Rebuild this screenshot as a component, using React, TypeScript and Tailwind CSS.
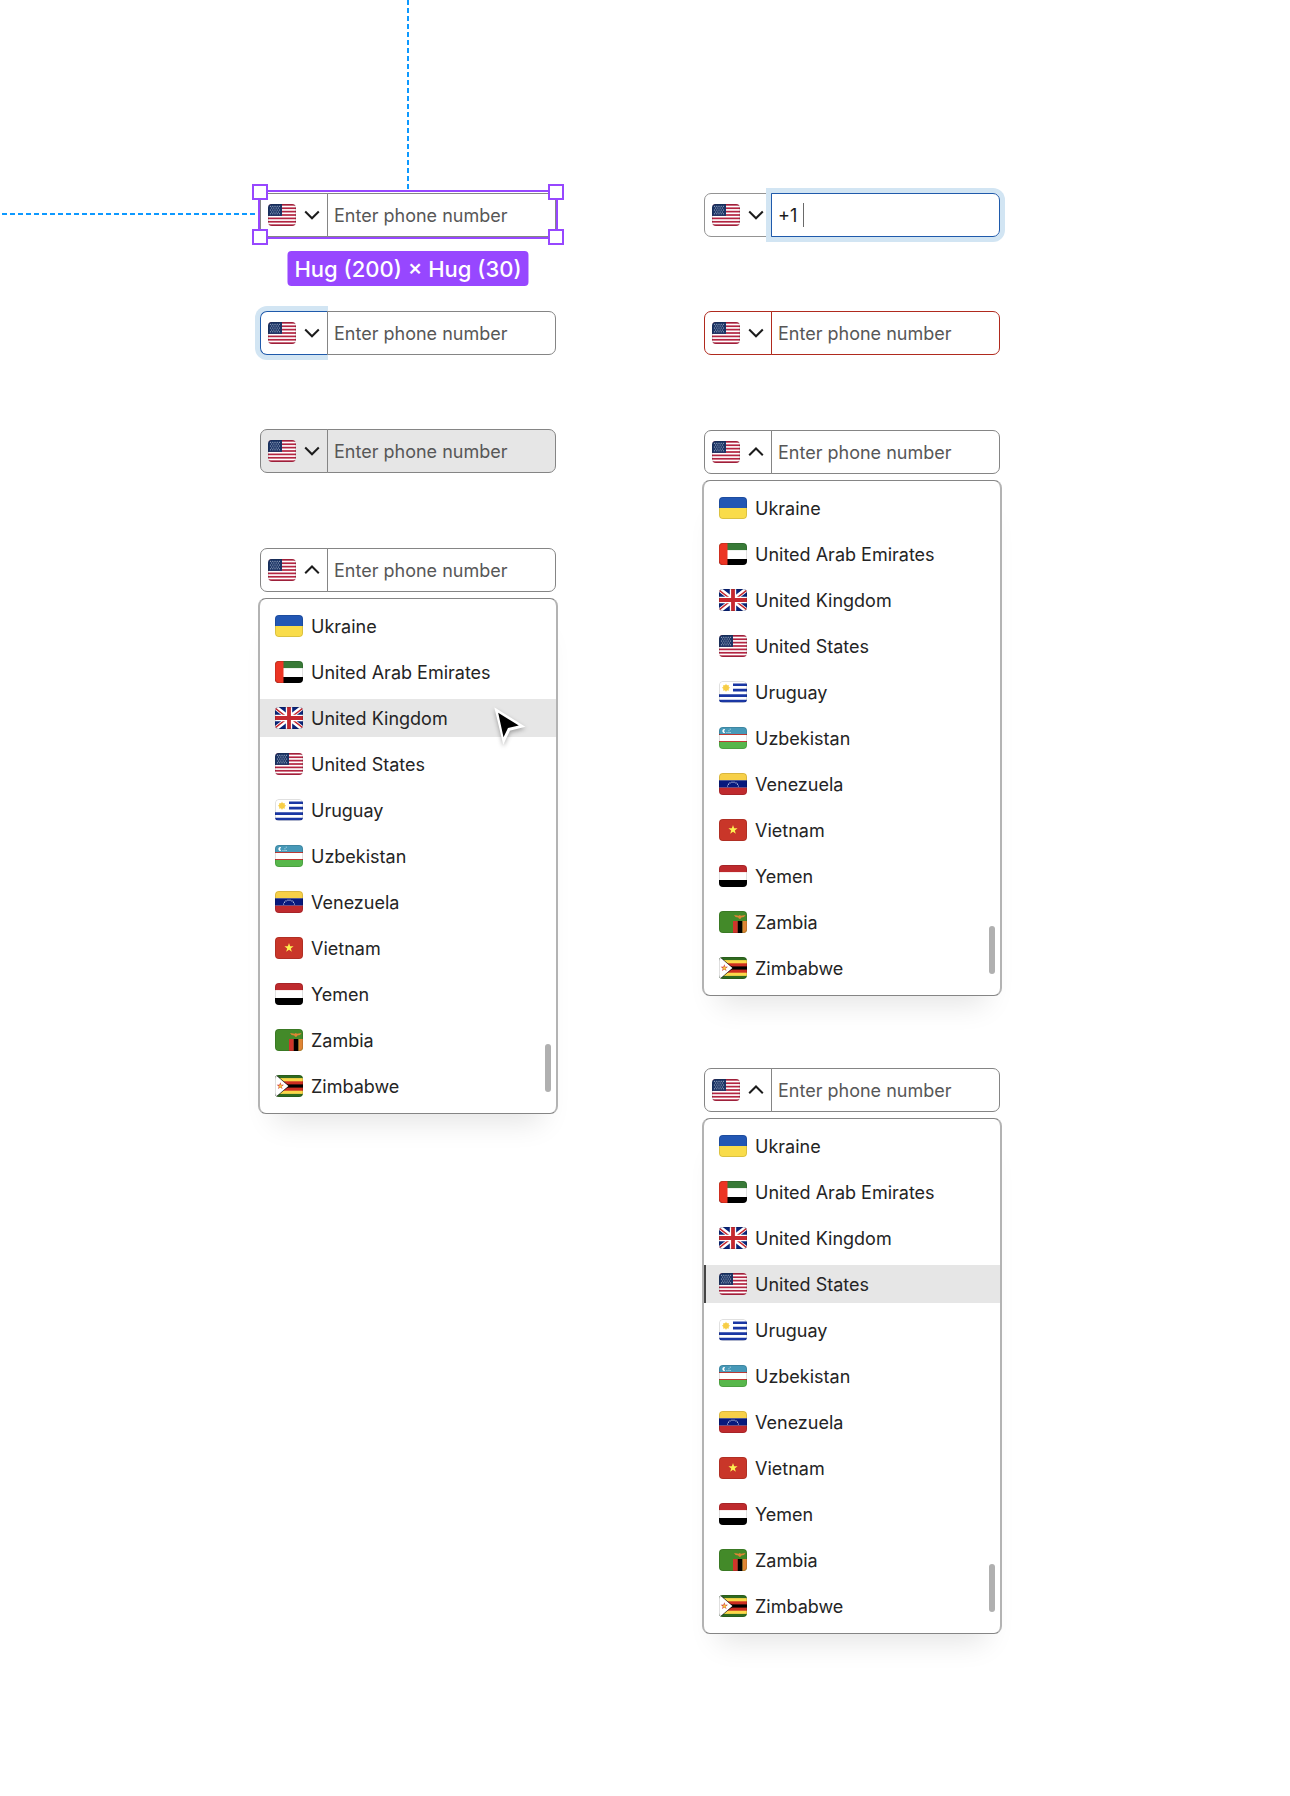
import type { ReactNode } from "react";

const starPoints = (cx: number, cy: number, r: number, inner = 0.4) =>
  Array.from({ length: 10 }, (_, i) => {
    const radius = i % 2 ? r * inner : r;
    const a = (Math.PI / 5) * i - Math.PI / 2;
    return `${(cx + radius * Math.cos(a)).toFixed(2)},${(cy + radius * Math.sin(a)).toFixed(2)}`;
  }).join(" ");

const flags: Record<string, ReactNode> = {
  ua: (
    <>
      <rect width="28" height="11" fill="#2257b4" />
      <rect y="11" width="28" height="11" fill="#f9dc4a" />
    </>
  ),
  ae: (
    <>
      <rect width="28" height="7.3" fill="#387a37" />
      <rect y="7.3" width="28" height="8.7" fill="#fff" />
      <rect y="16" width="28" height="6" fill="#000" />
      <rect width="8.5" height="22" fill="#ec3524" />
    </>
  ),
  gb: (
    <>
      <rect width="28" height="22" fill="#0a2478" />
      <path d="M0 0 28 22M28 0 0 22" stroke="#fff" strokeWidth="4.6" />
      <path d="M0 1 11 9.6M17 12.4 28 21M28 1 17 9.6M11 12.4 0 21" stroke="#c5282f" strokeWidth="1.5" />
      <path d="M14 0v22M0 11h28" stroke="#fff" strokeWidth="6.4" />
      <path d="M14 0v22M0 11h28" stroke="#c5282f" strokeWidth="3.8" />
    </>
  ),
  us: (
    <>
      <rect width="28" height="22" fill="#fff" />
      {[0, 1, 2, 3, 4, 5, 6].map((i) => (
        <rect key={i} y={i * 3.385} width="28" height="1.7" fill="#b32542" />
      ))}
      <rect width="14" height="11.9" fill="#1c3566" />
      {[0, 1, 2, 3, 4].map((row) =>
        [0, 1, 2, 3, 4].slice(0, row % 2 ? 4 : 5).map((col) => (
          <circle
            key={`${row}-${col}`}
            cx={2.6 + col * 2.2 + (row % 2 ? 1.1 : 0)}
            cy={2.2 + row * 1.9}
            r="0.5"
            fill="#d5dcea"
          />
        ))
      )}
    </>
  ),
  uy: (
    <>
      <rect width="28" height="22" fill="#fff" />
      <path d="M14 3.7h14M14 9.1h14M0 14.6h28M0 20h28" stroke="#1a37a4" strokeWidth="2.6" />
      <polygon points="7,2.6 8,4.4 10,3.9 9.6,5.8 11.2,6.8 9.6,7.8 10,9.7 8,9.2 7,11 6,9.2 4,9.7 4.4,7.8 2.8,6.8 4.4,5.8 4,3.9 6,4.4" fill="#f9d65c" />
      <circle cx="7" cy="6.8" r="2.7" fill="#f7cd46" />
    </>
  ),
  uz: (
    <>
      <rect width="28" height="22" fill="#fff" />
      <rect width="28" height="7" fill="#4799b8" />
      <rect y="15" width="28" height="7" fill="#57b74b" />
      <path d="M0 7.5h28M0 14.5h28" stroke="#bd3a34" />
      <path d="M6.2 2.2a2 2 0 1 0 0 3.6 2.4 2.4 0 0 1 0-3.6" fill="#fff" />
      <path d="M7.5 5.5h.9M9.5 5.5h.9M9.5 3.8h.9M10.8 2.2h.9M10.8 5.5h.9" stroke="#d8edf5" strokeWidth="0.9" />
    </>
  ),
  ve: (
    <>
      <rect width="28" height="7.3" fill="#f7d048" />
      <rect y="7.3" width="28" height="7.4" fill="#07197d" />
      <rect y="14.7" width="28" height="7.3" fill="#bf2a2e" />
      {[
        [8.6, 13],
        [9.5, 11.2],
        [11, 9.9],
        [13, 9.2],
        [15, 9.2],
        [17, 9.9],
        [18.5, 11.2],
        [19.4, 13],
      ].map(([cx, cy]) => (
        <circle key={cx} cx={cx} cy={cy} r="0.6" fill="#dfe4f5" />
      ))}
    </>
  ),
  vn: (
    <>
      <rect width="28" height="22" fill="#c93629" />
      <polygon points={starPoints(14, 10.8, 4.8)} fill="#fdf050" />
    </>
  ),
  ye: (
    <>
      <rect width="28" height="7.3" fill="#be2a2d" />
      <rect y="7.3" width="28" height="7.7" fill="#fff" />
      <rect y="15" width="28" height="7" fill="#000" />
    </>
  ),
  zm: (
    <>
      <rect width="28" height="22" fill="#438a29" />
      <rect x="14" y="10" width="4.8" height="12" fill="#d0352b" />
      <rect x="18.8" y="10" width="4.7" height="12" fill="#000" />
      <rect x="23.5" y="10" width="4.5" height="12" fill="#df8534" />
      <path d="M15 3.9 19.6 4.8 20.8 4 22 4.8 26.6 3.9 25 6 22.3 6.4 21.6 7.8 20 7.8 19.3 6.4 16.6 6Z" fill="#df8534" />
    </>
  ),
  zw: (
    <>
      <rect width="28" height="22" fill="#2f6a1f" />
      <rect y="3.1" width="28" height="15.8" fill="#fbd84a" />
      <rect y="6.3" width="28" height="9.4" fill="#cd2d20" />
      <rect y="9.4" width="28" height="3.2" fill="#000" />
      <path d="M0 -1 14.3 11 0 23Z" fill="#000" />
      <path d="M0 -0.5 13.4 11 0 22.5Z" fill="#fff" />
      <polygon points={starPoints(5.3, 11, 3.8)} fill="#d0352b" />
      <polygon points={starPoints(5.5, 11.3, 2.2, 0.55)} fill="#f3c545" />
    </>
  ),
};

function Flag({ code }: { code: string }) {
  return (
    <svg viewBox="0 0 28 22" className="h-[22px] w-7 shrink-0 overflow-hidden rounded-[4px]" aria-hidden="true">
      {flags[code]}
      <rect x="0.5" y="0.5" width="27" height="21" rx="3" fill="none" stroke="#000" strokeOpacity="0.12" />
    </svg>
  );
}

const countries = [
  ["ua", "Ukraine"],
  ["ae", "United Arab Emirates"],
  ["gb", "United Kingdom"],
  ["us", "United States"],
  ["uy", "Uruguay"],
  ["uz", "Uzbekistan"],
  ["ve", "Venezuela"],
  ["vn", "Vietnam"],
  ["ye", "Yemen"],
  ["zm", "Zambia"],
  ["zw", "Zimbabwe"],
];

type State = "default" | "focusCountry" | "focusNumber" | "error" | "disabled" | "open";

const buttonStyles: Record<State, string> = {
  default: "border-[#858585]",
  focusCountry:
    "border-[#1f5aab] border-r-[#858585] shadow-[0_0_0_5px_#d2e5f3] [clip-path:inset(-5px_0_-5px_-5px)]",
  focusNumber: "border-[#949494]",
  error: "border-[#b02a1e]",
  disabled: "border-[#858585] bg-[#e6e6e6]",
  open: "border-[#858585]",
};

const inputStyles: Record<State, string> = {
  default: "border-[#858585]",
  focusCountry: "border-[#858585]",
  focusNumber: "border-[#1f5aab] shadow-[0_0_0_5px_#d2e5f3]",
  error: "border-[#b02a1e]",
  disabled: "border-[#858585] bg-[#e6e6e6]",
  open: "border-[#858585]",
};

function PhoneField({ state = "default" }: { state?: State }) {
  const focused = state === "focusNumber";
  return (
    <div className="flex h-11 px-0.5">
      <button
        type="button"
        aria-label="Country: United States"
        aria-expanded={state === "open"}
        disabled={state === "disabled"}
        className={`flex w-[68px] shrink-0 items-center gap-2 rounded-l-[7px] border pl-[7px] ${buttonStyles[state]}`}
      >
        <Flag code="us" />
        <svg viewBox="0 0 16 10" className="h-2.5 w-4" fill="none" stroke="#1c1c1c" strokeWidth="2" aria-hidden="true">
          <path d={state === "open" ? "M1.2 8.3 8 1.5l6.8 6.8" : "M1.2 1.5 8 8.3l6.8-6.8"} />
        </svg>
      </button>
      <div className="relative -ml-px flex min-w-0 flex-1">
        <input
          type="tel"
          aria-label="Phone number"
          placeholder="Enter phone number"
          defaultValue={focused ? "+1" : undefined}
          disabled={state === "disabled"}
          className={`w-full min-w-0 rounded-r-[7px] border px-1.5 pt-0.5 text-lg text-[#1c1c1c] outline-none placeholder:text-[#575757] ${inputStyles[state]}`}
        />
        {focused && <span className="absolute top-2.5 left-8 h-6 w-px bg-[#6a6a6a]" />}
      </div>
    </div>
  );
}

function Cursor() {
  return (
    <svg
      viewBox="0 0 40 46"
      className="absolute top-0 right-6 h-[46px] w-10 drop-shadow-[0_2px_2px_rgba(0,0,0,0.3)]"
      aria-hidden="true"
    >
      <path d="M3.5 10 31.5 27.5 17.5 31 11.5 43.5Z" fill="#fff" stroke="#fff" strokeWidth="1.5" />
      <path d="M6.2 13.8 26.8 26.6 16 29 11.5 38.3Z" fill="#000" />
    </svg>
  );
}

function CountryMenu({ hovered, selected }: { hovered?: string; selected?: string }) {
  return (
    <div className="relative rounded-lg border-x-2 border-y border-x-[#b3b3b3] border-y-[#858585] bg-white py-2 shadow-[0_24px_28px_-16px_rgba(0,0,0,0.11)]">
      <ul className="flex flex-col gap-2">
        {countries.map(([code, name]) => {
          const active = code === hovered || code === selected;
          return (
            <li key={code} className="relative">
              <button
                type="button"
                className={`flex h-[38px] w-full items-center gap-2 border-l-2 pl-[13px] text-left text-lg text-[#242424] ${
                  active ? "bg-[#e6e6e6]" : ""
                } ${code === selected ? "border-l-[#454545]" : "border-l-transparent"}`}
              >
                <Flag code={code} />
                <span className="pt-0.5">{name}</span>
              </button>
              {code === hovered && <Cursor />}
            </li>
          );
        })}
      </ul>
      <span className="absolute right-[5px] bottom-[21px] h-12 w-1.5 rounded-full bg-[#b0b0b0]" />
    </div>
  );
}

function OpenPhoneField({ hovered, selected }: { hovered?: string; selected?: string }) {
  return (
    <div className="flex flex-col gap-1.5">
      <PhoneField state="open" />
      <CountryMenu hovered={hovered} selected={selected} />
    </div>
  );
}

const handle = "absolute size-4 border-2 border-[#9747ff] bg-white";

function Selection({ children }: { children: ReactNode }) {
  return (
    <div className="relative">
      {children}
      <div className="pointer-events-none absolute inset-x-0 -top-[3px] -bottom-0.5 border-2 border-[#9747ff]">
        <i className={`${handle} -top-2 -left-2`} />
        <i className={`${handle} -top-2 -right-2`} />
        <i className={`${handle} -bottom-2 -left-2`} />
        <i className={`${handle} -right-2 -bottom-2`} />
      </div>
      <div className="absolute right-full bottom-[22px] h-0.5 w-screen bg-[repeating-linear-gradient(to_left,transparent_0_3px,#0d99ff_3px_8px)]" />
      <div className="absolute bottom-full left-1/2 mb-0.5 -ml-px h-screen w-0.5 bg-[repeating-linear-gradient(to_top,transparent_0_2px,#0d99ff_2px_7px,transparent_7px_8px)]" />
      <div className="absolute top-[58px] left-1/2 flex h-[35px] -translate-x-1/2 items-center rounded-[4px] bg-[#9747ff] px-[7px] pt-0.5 text-[22px] font-medium whitespace-nowrap text-white">
        Hug (200) × Hug (30)
      </div>
    </div>
  );
}

export default function App() {
  return (
    <main className="flex min-h-screen items-start gap-36 overflow-hidden bg-white pt-[193px] pb-40 pl-[258px] font-['Inter',sans-serif]">
      <section className="flex w-[300px] flex-col gap-[75px]">
        <div className="flex flex-col gap-[74px]">
          <Selection>
            <PhoneField />
          </Selection>
          <PhoneField state="focusCountry" />
          <PhoneField state="disabled" />
        </div>
        <OpenPhoneField hovered="gb" />
      </section>
      <section className="flex w-[300px] flex-col gap-[75px]">
        <div className="flex flex-col gap-[74px]">
          <PhoneField state="focusNumber" />
          <PhoneField state="error" />
        </div>
        <div className="flex flex-col gap-[72px]">
          <OpenPhoneField />
          <OpenPhoneField selected="us" />
        </div>
      </section>
    </main>
  );
}
